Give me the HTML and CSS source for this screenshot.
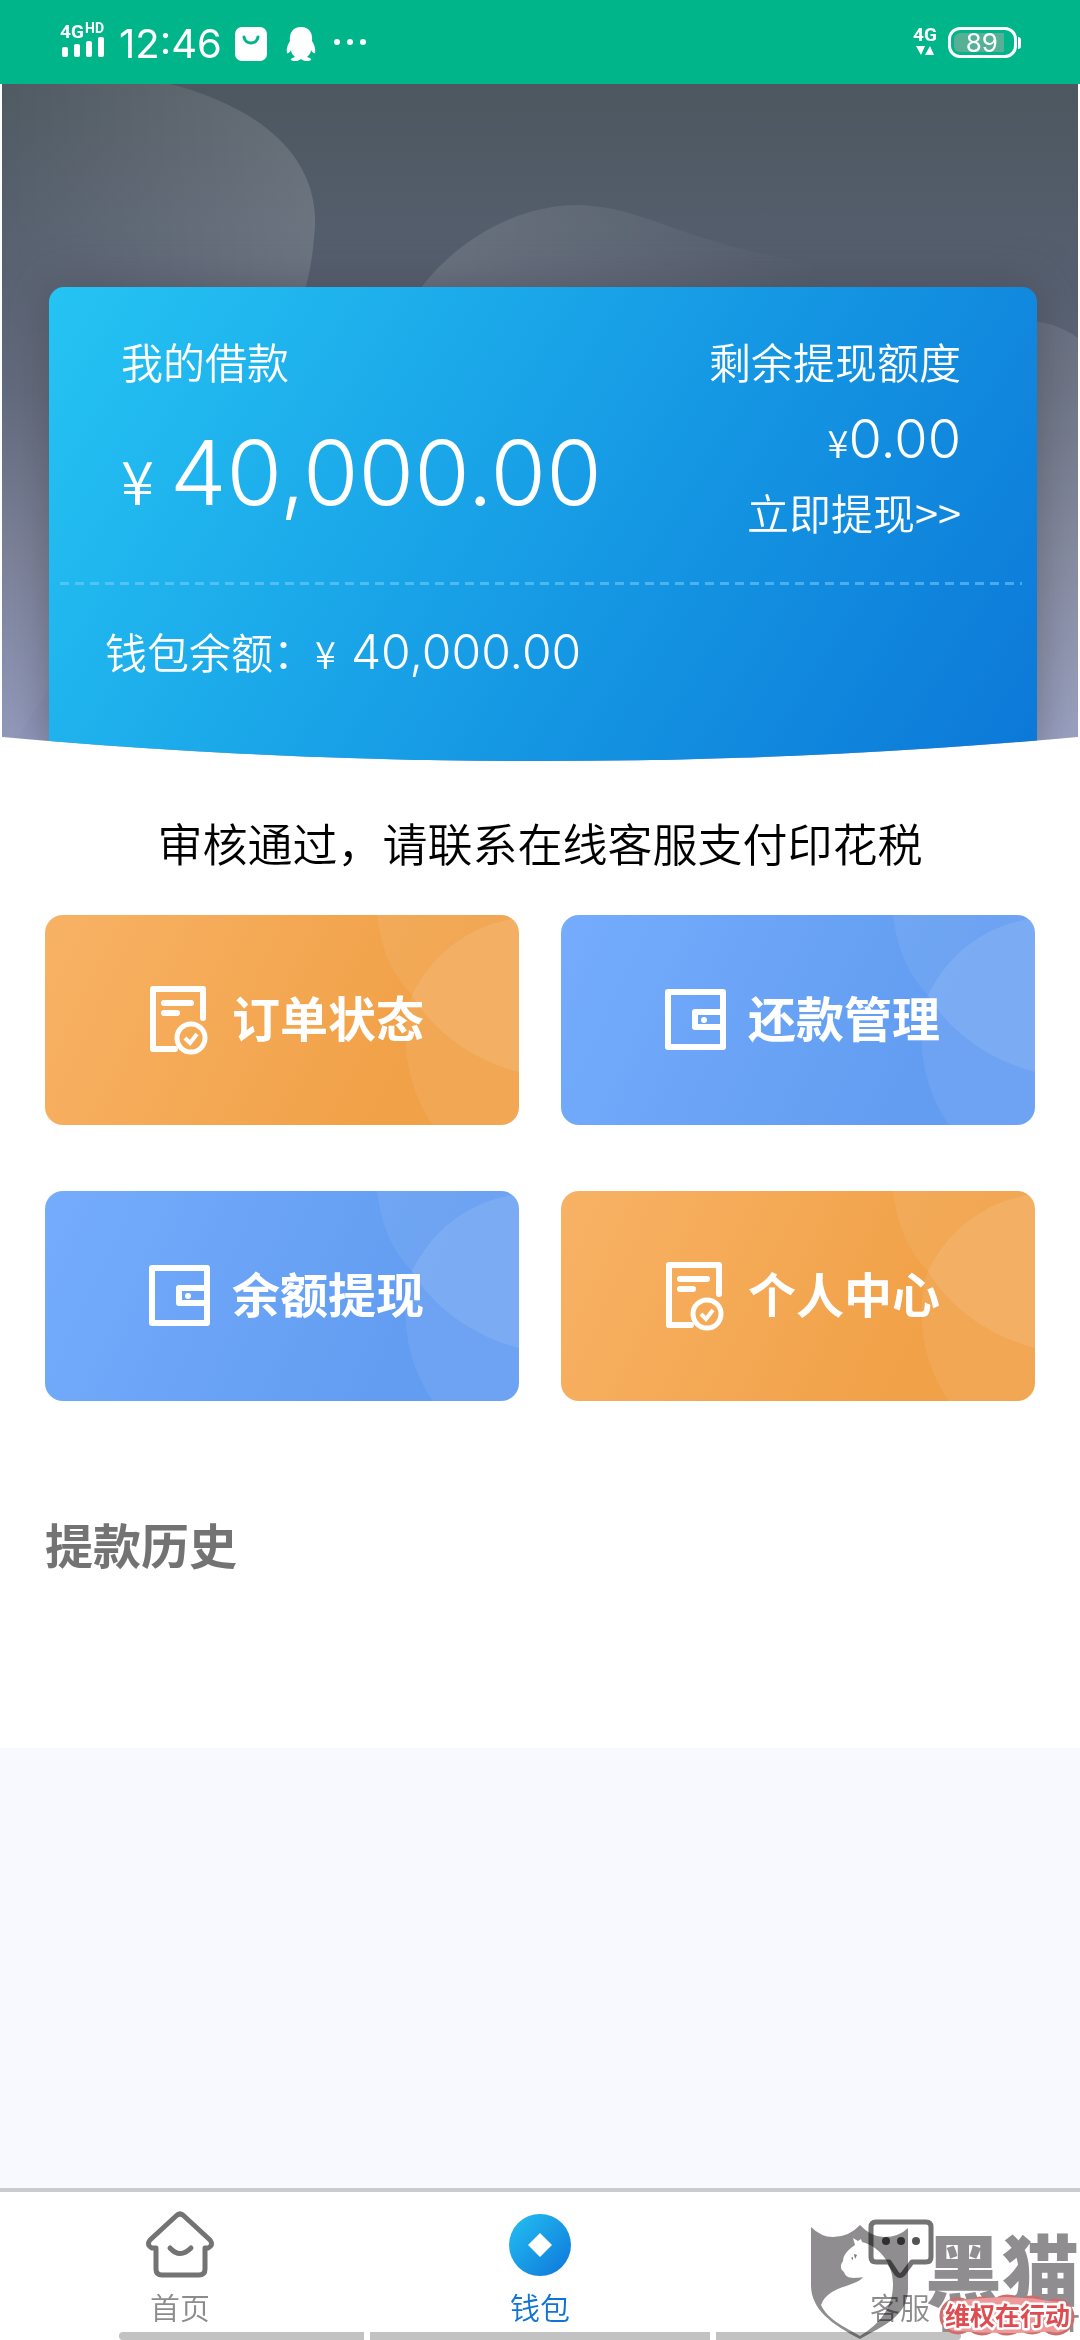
FILE: index.html
```html
<!DOCTYPE html>
<html lang="zh-CN">
<head>
<meta charset="utf-8">
<meta name="viewport" content="width=device-width, initial-scale=1">
<title>钱包</title>
<link rel="stylesheet" href="styles.css">
</head>
<body>
<svg class="defs" width="0" height="0" aria-hidden="true">
  <symbol id="icon-order" viewBox="0 0 84 84">
    <path d="M35 71H13V11h50v29M24 25h27M24 35h13" fill="none" stroke="currentColor" stroke-width="6" stroke-linecap="round" stroke-linejoin="round"/>
    <circle cx="51" cy="60" r="14" fill="none" stroke="currentColor" stroke-width="5"/>
    <path d="M45 60l5 5 7-9" fill="none" stroke="currentColor" stroke-width="4"/>
  </symbol>
  <symbol id="icon-wallet" viewBox="0 0 84 84">
    <path d="M12 14h55v55H12zM66 34H39v15h27" fill="none" stroke="currentColor" stroke-width="6" stroke-linejoin="round"/>
    <circle cx="48" cy="42" r="3" fill="currentColor"/>
  </symbol>
  <symbol id="card-rings" viewBox="0 0 142 210">
    <path d="M0 0C4 33 15 60 35 80C22 118 28 170 56 210H142V0z" fill="#fff" fill-opacity=".07"/>
    <path d="M142 3C90 10 55 40 35 80C55 115 95 145 142 157z" fill="#fff" fill-opacity=".1"/>
  </symbol>
</svg>

<div class="app">
  <header class="status">
    <div class="status-group">
      <svg class="signal" width="48" height="44" viewBox="0 0 48 44" fill="#fff" aria-hidden="true">
        <text x="0" y="20" font-size="19" font-weight="700">4G</text>
        <text x="25" y="15" font-size="14" font-weight="700">HD</text>
        <rect x="2" y="29" width="6" height="10" rx="2"/><rect x="14" y="26" width="6" height="13" rx="2"/><rect x="26" y="23" width="6" height="16" rx="2"/><rect x="38" y="19" width="6" height="20" rx="2"/>
      </svg>
      <time class="clock">12:46</time>
      <svg class="mall" width="34" height="36" viewBox="0 0 34 36" aria-hidden="true">
        <rect x="1" y="1" width="32" height="34" rx="7" fill="#fff"/>
        <path d="M10 11c1 8 13 8 14 0" fill="none" stroke="#01b58a" stroke-width="3" stroke-linecap="round"/>
      </svg>
      <svg class="penguin" width="30" height="36" viewBox="0 0 30 36" fill="#fff" aria-hidden="true">
        <path d="M15 1C7 1 3 7 4 15C2 18 0 23 1 27C2 28 4 26 5 24C5 27 7 29 9 31C6 32 4 33 5 34C8 36 13 35 15 33C17 35 22 36 25 34C26 33 24 32 21 31C23 29 25 27 25 24C26 26 28 28 29 27C30 23 28 18 26 15C27 7 23 1 15 1z"/>
      </svg>
      <svg width="36" height="8" viewBox="0 0 36 8" fill="#fff" aria-hidden="true"><circle cx="5" cy="4" r="3"/><circle cx="18" cy="4" r="3"/><circle cx="31" cy="4" r="3"/></svg>
    </div>
    <div class="status-group">
      <svg class="data" width="28" height="38" viewBox="0 0 28 38" fill="#fff" aria-hidden="true">
        <text x="1" y="20" font-size="19" font-weight="700">4G</text>
        <path d="M4 25h9l-4 9zM13 34h9l-4-9z"/>
      </svg>
      <div class="battery"><span class="battery-value">89</span></div>
    </div>
  </header>

  <main class="content">
    <section class="hero">
      <svg class="hero-art" viewBox="0 0 1080 677" preserveAspectRatio="none" aria-hidden="true">
        <defs>
          <linearGradient id="blob-a" x1="0" y1="0" x2="1" y2="0"><stop offset="0" stop-color="#fff" stop-opacity=".02"/><stop offset="1" stop-color="#fff" stop-opacity=".14"/></linearGradient>
          <linearGradient id="blob-b" x1="0" y1="0" x2="1" y2="0"><stop offset="0" stop-color="#fff" stop-opacity=".13"/><stop offset="1" stop-color="#fff" stop-opacity="0"/></linearGradient>
        </defs>
        <path d="M0 0H168C250 20 325 70 313 155Q311 185 300 220L0 677z" fill="url(#blob-a)"/>
        <path d="M410 220C442 165 512 119 582 121C652 125 682 160 822 180V220z" fill="url(#blob-b)"/>
        <path d="M1020 236Q1055 236 1080 254V677H1020z" fill="#fff" fill-opacity=".1"/>
      </svg>
      <div class="loan-card">
        <div class="loan-main">
          <div class="loan-total">
            <h2 class="label">我的借款</h2>
            <p class="amount amount-large"><span class="yen">¥</span>40,000.00</p>
          </div>
          <div class="loan-quota">
            <h2 class="label">剩余提现额度</h2>
            <p class="amount amount-medium"><span class="yen">¥</span>0.00</p>
            <a class="label" href="#withdraw">立即提现&gt;&gt;</a>
          </div>
        </div>
        <div class="dash"></div>
        <p class="balance"><span class="label">钱包余额：</span><span class="amount amount-small"><span class="yen">¥</span>40,000.00</span></p>
      </div>
    </section>

    <p class="notice">审核通过，请联系在线客服支付印花税</p>

    <nav class="actions" aria-label="功能">
      <a class="action orange" href="#orders"><svg class="rings" aria-hidden="true"><use href="#card-rings"/></svg><svg class="action-icon" aria-hidden="true"><use href="#icon-order"/></svg><span class="action-name">订单状态</span></a>
      <a class="action blue" href="#repay"><svg class="rings" aria-hidden="true"><use href="#card-rings"/></svg><svg class="action-icon" aria-hidden="true"><use href="#icon-wallet"/></svg><span class="action-name">还款管理</span></a>
      <a class="action blue" href="#withdraw"><svg class="rings" aria-hidden="true"><use href="#card-rings"/></svg><svg class="action-icon" aria-hidden="true"><use href="#icon-wallet"/></svg><span class="action-name">余额提现</span></a>
      <a class="action orange" href="#profile"><svg class="rings" aria-hidden="true"><use href="#card-rings"/></svg><svg class="action-icon" aria-hidden="true"><use href="#icon-order"/></svg><span class="action-name">个人中心</span></a>
    </nav>

    <section class="history">
      <h2 class="history-title">提款历史</h2>
    </section>
  </main>

  <footer class="tabbar">
    <nav class="tabs" aria-label="主导航">
      <a class="tab" href="#home">
        <svg width="72" height="72" viewBox="0 0 72 72" fill="none" stroke="#737373" stroke-width="5" stroke-linecap="round" stroke-linejoin="round" aria-hidden="true"><path d="M12 40v21q0 6 6 6h37q6 0 6-6V40M12 40H8q-6-3-2-8L32 8q4-4 8 0l26 24q4 5-2 8h-3M26 40q10 11 21 0"/></svg>
        <span>首页</span>
      </a>
      <a class="tab active" href="#wallet" aria-current="page">
        <svg width="72" height="72" viewBox="0 0 72 72" aria-hidden="true"><defs><linearGradient id="coin" x1="0" y1="0" x2="1" y2="1"><stop offset="0" stop-color="#24c0f2"/><stop offset="1" stop-color="#0d76da"/></linearGradient></defs><circle cx="36" cy="37" r="31" fill="url(#coin)"/><path d="M36 25l12 12-12 12-12-12z" fill="#fff"/></svg>
        <span>钱包</span>
      </a>
      <a class="tab" href="#service">
        <svg width="72" height="72" viewBox="0 0 72 72" aria-hidden="true"><path d="M12 14h50q5 0 5 5v30q0 5-5 5H48L39 66q-3 3-6 0L25 54H12q-5 0-5-5V19q0-5 5-5z" fill="none" stroke="#737373" stroke-width="5" stroke-linejoin="round"/><g fill="#555"><circle cx="22" cy="33" r="4"/><circle cx="37" cy="33" r="4"/><circle cx="52" cy="33" r="4"/></g></svg>
        <span>客服</span>
      </a>
    </nav>
    <div class="strips"><span class="strip strip-start"></span><span class="strip strip-mid"></span><span class="strip strip-end"></span></div>
  </footer>

  <svg class="stamp stamp-mark" width="269" height="117" viewBox="0 0 269 117" role="img" aria-label="黑猫 BLACK CAT">
    <path fill="#8f8d8f" fill-rule="evenodd" d="M0 4Q10 14 22 14Q38 14 49 2Q60 14 73 14Q88 14 97 5V65C97 92 76 101 49 116C20 101 0 86 0 62zM42 15L44 22C36 27 32 33 32 38C29 42 29 46 33 49C35 55 40 56 52 54C46 64 17 62 10 82C17 97 34 104 49 113C70 100 82 84 82 61C82 42 70 24 51 19L50 16L47 18z"/>
    <path d="M40 35l2-1v3zM43 31l3 1-2 4z" fill="#777"/>
    <text class="stamp-name" x="114" y="77">黑猫</text>
    <text class="stamp-latin" x="268" y="109" text-anchor="end">BLACK CAT</text>
  </svg>
  <svg class="stamp" width="269" height="117" viewBox="0 0 269 117" role="img" aria-label="维权在行动">
    <g fill="#ef9a9a" stroke="#c96f70" stroke-width="3"><circle cx="147" cy="93" r="17"/><circle cx="171" cy="93" r="18"/><circle cx="196" cy="92" r="19"/><circle cx="221" cy="92" r="18"/><circle cx="245" cy="94" r="17"/></g>
    <path d="M147 78Q196 70 245 79Q260 93 246 108Q196 112 147 108Q132 94 147 78z" fill="#ef9a9a"/>
    <text class="stamp-slogan" x="134" y="102">维权在行动</text>
  </svg>
</div>
</body>
</html>
```

FILE: styles.css
```css
* { box-sizing: border-box; }

body {
  margin: 0;
  font-family: "Noto Sans CJK SC", sans-serif;
  font-weight: 350;
  background: #f8f9ff;
  color: #000;
}

h2, p { margin: 0; font-weight: inherit; }
a { color: inherit; text-decoration: none; }
.defs { position: absolute; }

.app {
  position: relative;
  display: flex;
  flex-direction: column;
  min-height: 100vh;
}

/* Status bar */
.status {
  display: flex;
  align-items: center;
  justify-content: space-between;
  height: 84px;
  padding: 0 63px 0 60px;
  background: #01b58a;
  color: #fff;
  font-family: Roboto, sans-serif;
}
.status-group { display: flex; align-items: center; }
.signal, .data { overflow: visible; }
.signal { margin-bottom: 4px; }
.clock {
  margin: 4px 12px 0 11px;
  font: 400 40px/48px Inter, sans-serif;
}
.mall { margin-top: 4px; }
.penguin { margin: 4px 16px 0 18px; }
.data { margin: 0 8px 4px 0; }
.battery {
  position: relative;
  display: flex;
  width: 69px;
  height: 31px;
  padding: 3px;
  border: 3px solid #fff;
  border-radius: 12px;
}
.battery::after {
  content: "";
  position: absolute;
  top: 7px;
  right: -7px;
  width: 3px;
  height: 12px;
  border-radius: 0 3px 3px 0;
  background: #fff;
}
.battery-value {
  width: 50px;
  border-radius: 6px 0 0 6px;
  background: #55b095;
  font: 400 26px/20px Inter, sans-serif;
  text-align: right;
  padding-right: 6px;
}

/* Hero with the loan card */
.content { background: #fff; }
.hero {
  position: relative;
  margin: 0 2px;
  padding: 203px 41px 0 47px;
  overflow: hidden;
  background: linear-gradient(#4d575f, #576071 30%, #5f677a 45%, #7a8098 70%, #939bc0);
  clip-path: ellipse(189% 100% at 50% 0);
}
.hero-art {
  position: absolute;
  inset: 0;
  width: 100%;
  height: 100%;
}
.loan-card {
  position: relative;
  padding: 44px 15px 79px 11px;
  border-radius: 15px 15px 0 0;
  background: linear-gradient(122deg, #25c4f3, #1597e3 58%, #0c78d8);
  box-shadow: 0 0 45px rgba(60, 60, 70, .5);
  color: #fff;
}
.loan-main {
  display: flex;
  justify-content: space-between;
  padding: 0 61px;
}
.label { font-size: 42px; line-height: 60px; }
.loan-quota {
  display: flex;
  flex-direction: column;
  align-items: flex-end;
}
.amount { font-family: Inter, sans-serif; }
.yen { font-family: "Noto Sans CJK SC", sans-serif; }
.amount-large { margin-top: 22px; font-size: 90px; line-height: 120px; }
.amount-large .yen { margin-right: 16px; font-size: 60px; line-height: 60px; }
.amount-medium { margin: 15px 0 10px; font-size: 54px; line-height: 66px; }
.amount-medium .yen { font-size: 38px; line-height: 38px; }
.amount-small { font-size: 48px; }
.amount-small .yen { margin-right: 15px; font-size: 38px; line-height: 38px; }
.dash {
  height: 3px;
  margin-top: 40px;
  background: repeating-linear-gradient(90deg, rgba(130, 210, 255, .5) 0 9px, transparent 9px 15px);
}
.balance {
  display: flex;
  align-items: baseline;
  margin: 36px 45px 0;
  line-height: 60px;
}

.notice {
  padding: 50px 45px 40px;
  font-size: 45px;
  line-height: 64px;
  text-align: center;
}

/* Action cards */
.actions {
  display: grid;
  grid-template-columns: 1fr 1fr;
  gap: 66px 42px;
  padding: 0 45px;
}
.action {
  position: relative;
  display: flex;
  align-items: center;
  justify-content: center;
  gap: 8px;
  height: 210px;
  overflow: hidden;
  border-radius: 18px;
  color: #fff;
  font-size: 48px;
  font-weight: 700;
}
.action-name { position: relative; padding-bottom: 8px; }
.action-icon { position: relative; width: 84px; height: 84px; }
.rings {
  position: absolute;
  top: 0;
  right: 0;
  width: 142px;
  height: 210px;
}
.orange { background: linear-gradient(115deg, #f8b265, #f1a147 75%); }
.blue { background: linear-gradient(115deg, #75acfd, #629df1 75%); }

.history { padding: 106px 45px 169px; }
.history-title {
  color: #737373;
  font-size: 48px;
  font-weight: 700;
  line-height: 72px;
}

/* Bottom tabs */
.tabbar {
  margin-top: auto;
  border-top: 4px solid #c9cccc;
  background: #fff;
}
.tabs {
  display: grid;
  grid-template-columns: repeat(3, 1fr);
  padding: 16px 0 8px;
}
.tab {
  display: flex;
  flex-direction: column;
  align-items: center;
  gap: 8px;
  color: #8c8c8c;
  font-size: 30px;
  line-height: 36px;
}
.active { color: #1173d4; }
.strips { display: flex; gap: 6px; padding: 0 11%; }
.strip { height: 8px; background: #c2c2c2; }
.strip-start { flex: 244; border-radius: 4px 0 0 4px; }
.strip-mid { flex: 338; }
.strip-end { flex: 244; border-radius: 0 4px 4px 0; }

/* Brand stamp laid over the corner */
.stamp {
  position: absolute;
  right: 0;
  bottom: 0;
  pointer-events: none;
}
.stamp-mark { mix-blend-mode: multiply; }
.stamp-name { font-size: 77px; font-weight: 900; fill: #8f8d8f; }
.stamp-latin { font: 700 24px "Liberation Sans", sans-serif; fill: #8f8d8f; }
.stamp-slogan {
  font-size: 25px;
  font-weight: 700;
  fill: #dc4c50;
  stroke: #fff;
  stroke-width: 5px;
  stroke-linejoin: round;
  paint-order: stroke;
}
```
